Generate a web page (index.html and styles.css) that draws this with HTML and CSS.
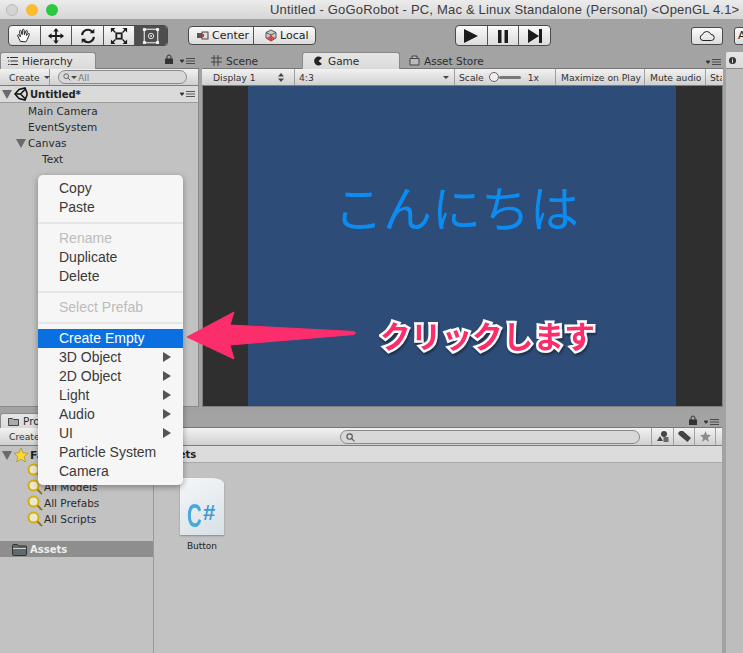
FILE: index.html
```html
<!DOCTYPE html>
<html lang="ja">
<head>
    <meta charset="UTF-8">
    <title>Untitled - GoGoRobot</title>
    <link rel="stylesheet" href="styles.css">
</head>
<body>
<div class="window">
    <div class="titlebar">
        <span class="light light-grey"></span>
        <span class="light light-yellow"></span>
        <span class="light light-green"></span>
        <span class="title">Untitled - GoGoRobot - PC, Mac &amp; Linux Standalone (Personal) &lt;OpenGL 4.1&gt;</span>
    </div>

    <div class="toolbar">
        <div class="btn-group tools">
            <span class="tool"><svg width="20" height="20" viewBox="0 0 20 20"><path d="M6 16 3 10c-.6-1.2.8-2 1.6-1L6 11 5 5c-.2-1.3 1.5-1.6 1.8-.4L8 8.500 8.200 3.500c.1-1.300 1.800-1.300 1.900 0L10.500 8.500 12 4.500c.4-1.200 2-.7 1.700.5L12.700 9.500 14.500 7.500c.9-.9 2.100.1 1.400 1.100L13.500 14c-.5 1.200-1 2-1.500 2.500Z" fill="#fff" stroke="#222" stroke-width="1.100"/></svg></span>
            <span class="tool"><svg width="20" height="20" viewBox="0 0 20 20"><path d="M10 1 13 5H11V9H15V7L19 10 15 13V11H11V15H13L10 19 7 15H9V11H5V13L1 10 5 7V9H9V5H7Z" fill="#1c1c1c"/></svg></span>
            <span class="tool"><svg width="20" height="20" viewBox="0 0 20 20" fill="none" stroke="#1c1c1c" stroke-width="2.400"><path d="M3.500 9A6.500 6.500 0 0 1 15 5.500"/><path d="M16.500 11A6.500 6.500 0 0 1 5 14.500"/><path d="M17 2v5h-5zM3 18v-5h5z" fill="#1c1c1c" stroke="none"/></svg></span>
            <span class="tool"><svg width="20" height="20" viewBox="0 0 20 20"><g fill="none" stroke="#1c1c1c" stroke-width="1.500"><rect x="7" y="7" width="6" height="6" stroke-width="2"/><path d="M2 2l4 4M18 2l-4 4M2 18l4-4M18 18l-4-4"/></g><path d="M1 1h5L1 6zM19 1h-5l5 5zM1 19h5l-5-5zM19 19h-5l5-5z" fill="#1c1c1c"/></svg></span>
            <span class="tool tool-on"><svg width="20" height="20" viewBox="0 0 20 20"><rect x="2.500" y="2.500" width="15" height="15" fill="none" stroke="#eee" stroke-width="1.200"/><circle cx="10" cy="10" r="3" fill="none" stroke="#eee"/><circle cx="10" cy="10" r="1" fill="#eee"/><g fill="#eee"><rect x="1" y="1" width="3.500" height="3.500" rx="1"/><rect x="15.500" y="1" width="3.500" height="3.500" rx="1"/><rect x="1" y="15.500" width="3.500" height="3.500" rx="1"/><rect x="15.500" y="15.500" width="3.500" height="3.500" rx="1"/></g></svg></span>
        </div>
        <div class="btn-group pivot">
            <span class="pivot-btn pivot-center"><svg width="12" height="9" viewBox="0 0 12 9"><rect x="0" y="2" width="5" height="5" fill="#555"/><rect x="5" y="1" width="6" height="7" fill="#ddd" stroke="#444"/><rect x="4" y="3" width="3" height="3" fill="#c33"/></svg>Center</span>
            <span class="pivot-btn pivot-local"><svg width="12" height="13" viewBox="0 0 12 13"><path d="M6 1 11 3.500V9L6 12 1 9V3.500Z" fill="#ccc" stroke="#555"/><path d="M1 3.500 6 6 11 3.500M6 6V12" fill="none" stroke="#555"/><path d="M1.500 9 6 12 10.500 9 6 6.500Z" fill="#d33" opacity=".8"/></svg>Local</span>
        </div>
        <div class="btn-group play">
            <span class="play-btn"><svg width="16" height="14" viewBox="0 0 16 14"><path d="M1 0 15 7 1 14Z" fill="#1c1c1c"/></svg></span>
            <span class="play-btn"><svg width="12" height="14" viewBox="0 0 12 14"><path d="M1 1h3.500v13H1zM7.500 1H11v13H7.500z" fill="#1c1c1c"/></svg></span>
            <span class="play-btn"><svg width="16" height="14" viewBox="0 0 16 14"><path d="M1 0 12 7 1 14ZM12 0h3v14h-3z" fill="#1c1c1c"/></svg></span>
        </div>
        <span class="cloud"><svg width="16" height="10" viewBox="0 0 16 10"><path d="M4 9.500A3 3 0 0 1 3.500 3.600 4.500 4.500 0 0 1 12 3.500 3 3 0 0 1 12.500 9.500Z" fill="none" stroke="#222"/></svg></span>
        <span class="account">A</span>
    </div>

    <div class="upper">
        <section class="hierarchy">
            <div class="tabbar">
                <span class="tab tab-on tab-hierarchy"><svg width="11" height="8" viewBox="0 0 11 8"><path d="M0 .5h2M3 .5h8M1 4h1.500M3.500 4H11M1 7.500h1.500M3.500 7.500H11" stroke="#333" fill="none"/></svg>Hierarchy</span>
                <span class="tab-tools">
                    <svg class="lock" width="8" height="10" viewBox="0 0 8 10"><path d="M2 5V3a2 2 0 0 1 4 0v2" fill="none" stroke="#333"/><rect y="4.500" width="8" height="5.500" fill="#333"/></svg>
                    <svg width="15" height="6" viewBox="0 0 15 6"><path d="M0 2h4L2 4.500zM6 .5h9M6 3h9M6 5.500h9" fill="#333" stroke="#333" stroke-width=".8"/></svg>
                </span>
            </div>
            <div class="panel-bar">
                <span class="bar-create">Create<i class="caret"></i></span>
                <span class="search search-hier"><svg width="8" height="8" viewBox="0 0 8 8"><circle cx="3.200" cy="3.200" r="2.400" fill="none" stroke="#666"/><path d="M5 5l2.500 2.500" stroke="#666"/></svg><i class="caret"></i>All</span>
            </div>
            <div class="scene-row">
                <i class="fold"></i>
                <svg width="14" height="14" viewBox="0 0 14 14"><path d="M1 7 5 2.500 11 1 13 6V8L11 13 5 11.500Z" fill="none" stroke="#111" stroke-width="1.500"/><path d="M1 7H6.500L11 2.500M6.500 7 11 11.500" fill="none" stroke="#111" stroke-width="1.500"/></svg>
                <b>Untitled*</b>
                <svg class="row-menu" width="15" height="6" viewBox="0 0 15 6"><path d="M0 2h4L2 4.500zM6 .5h9M6 3h9M6 5.500h9" fill="#333" stroke="#333" stroke-width=".8"/></svg>
            </div>
            <div class="tree">
                <div class="tree-item">Main Camera</div>
                <div class="tree-item">EventSystem</div>
                <div class="tree-item"><i class="fold fold-canvas"></i>Canvas</div>
                <div class="tree-item tree-child">Text</div>
            </div>
        </section>

        <section class="game">
            <div class="tabbar">
                <span class="tab tab-scene"><svg width="11" height="11" viewBox="0 0 11 11"><path d="M3 0v11M7 0v11M0 3h11M0 7h11" stroke="#444" fill="none"/></svg>Scene</span>
                <span class="tab tab-on tab-game"><svg width="10" height="10" viewBox="0 0 10 10"><path d="M9 2A4.500 4.500 0 1 0 9 8L5.500 5Z" fill="#222"/></svg>Game</span>
                <span class="tab tab-store"><svg width="11" height="11" viewBox="0 0 11 11"><path d="M1 3.500h9V10H1zM3 3.500V1h5v2.500" fill="#bbb" stroke="#444"/></svg>Asset Store</span>
                <svg class="tab-tools game-menu" width="15" height="6" viewBox="0 0 15 6"><path d="M0 2h4L2 4.500zM6 .5h9M6 3h9M6 5.500h9" fill="#333" stroke="#333" stroke-width=".8"/></svg>
            </div>
            <div class="panel-bar game-bar">
                <span class="g-display">Display 1<svg width="6" height="9" viewBox="0 0 6 9"><path d="M3 0 6 3.500H0ZM3 9 0 5.500H6Z" fill="#444"/></svg></span>
                <span class="g-aspect">4:3<i class="caret"></i></span>
                <span class="g-scale">Scale<i class="knob"></i><i class="slide"></i>1x</span>
                <span class="g-max">Maximize on Play</span>
                <span class="g-mute">Mute audio</span>
                <span class="g-stats">Sta</span>
            </div>
            <div class="viewport">
                <div class="screen">こんにちは</div>
            </div>
        </section>

        <section class="inspector">
            <span class="insp-tab"><svg width="7" height="7" viewBox="0 0 7 7"><circle cx="3.500" cy="3.500" r="3.500" fill="#333"/><path d="M3.500 1.500v1M3.500 3.200v2.500" stroke="#fff"/></svg></span>
        </section>
    </div>

    <div class="lower">
        <section class="project">
            <div class="tabbar project-tabs">
                <span class="tab tab-on tab-project"><svg width="11" height="9" viewBox="0 0 11 9"><path d="M.5 1.500h4l1 1h5v6H.5Z" fill="#aaa" stroke="#444"/></svg>Project</span>
                <span class="tab-tools project-tools">
                    <svg class="lock" width="8" height="10" viewBox="0 0 8 10"><path d="M2 5V3a2 2 0 0 1 4 0v2" fill="none" stroke="#333"/><rect y="4.500" width="8" height="5.500" fill="#333"/></svg>
                    <svg width="15" height="6" viewBox="0 0 15 6"><path d="M0 2h4L2 4.500zM6 .5h9M6 3h9M6 5.500h9" fill="#333" stroke="#333" stroke-width=".8"/></svg>
                </span>
            </div>
            <div class="panel-bar project-bar">
                <span class="bar-create project-create">Create<i class="caret"></i></span>
                <span class="search search-project"><svg width="9" height="9" viewBox="0 0 8 8"><circle cx="3.200" cy="3.200" r="2.400" fill="none" stroke="#555"/><path d="M5 5l2.500 2.500" stroke="#555"/></svg></span>
                <span class="bar-icon"><svg width="12" height="11" viewBox="0 0 12 11"><circle cx="7" cy="3" r="3" fill="#444"/><path d="M3 5 6 10H0Z" fill="#444"/><rect x="6.500" y="6" width="5" height="5" fill="#666"/></svg></span>
                <span class="bar-icon"><svg width="13" height="11" viewBox="0 0 13 11"><path d="M0 2 2 0 5 0 13 7 9.500 11 1 4Z" fill="#444"/></svg></span>
                <span class="bar-icon"><svg width="11" height="11" viewBox="0 0 11 11"><path d="M5.500 0 7 3.800 11 4 8 6.700 9 11 5.500 8.600 2 11 3 6.700 0 4 4 3.800Z" fill="#8c8c8c"/></svg></span>
            </div>
            <div class="browser">
                <div class="side">
                    <div class="fav-row"><i class="fold"></i><svg width="14" height="14" viewBox="0 0 11 11"><path d="M5.500 0 7 3.800 11 4 8 6.700 9 11 5.500 8.600 2 11 3 6.700 0 4 4 3.800Z" fill="#fbd92f" stroke="#a58a10" stroke-width=".5"/></svg><b>Favorites</b></div>
                    <div class="fav-item"><svg class="mag" width="16" height="16" viewBox="0 0 16 16"><circle cx="6.500" cy="6.500" r="5" fill="#ece8cf" stroke="#d6ad0a" stroke-width="2"/><path d="M10.500 10.500 15 15" stroke="#8f7a20" stroke-width="2"/></svg>All Materials</div>
                    <div class="fav-item"><svg class="mag" width="16" height="16" viewBox="0 0 16 16"><circle cx="6.500" cy="6.500" r="5" fill="#ece8cf" stroke="#d6ad0a" stroke-width="2"/><path d="M10.500 10.500 15 15" stroke="#8f7a20" stroke-width="2"/></svg>All Models</div>
                    <div class="fav-item"><svg class="mag" width="16" height="16" viewBox="0 0 16 16"><circle cx="6.500" cy="6.500" r="5" fill="#ece8cf" stroke="#d6ad0a" stroke-width="2"/><path d="M10.500 10.500 15 15" stroke="#8f7a20" stroke-width="2"/></svg>All Prefabs</div>
                    <div class="fav-item"><svg class="mag" width="16" height="16" viewBox="0 0 16 16"><circle cx="6.500" cy="6.500" r="5" fill="#ece8cf" stroke="#d6ad0a" stroke-width="2"/><path d="M10.500 10.500 15 15" stroke="#8f7a20" stroke-width="2"/></svg>All Scripts</div>
                    <div class="assets-row"><svg width="15" height="13" viewBox="0 0 15 13"><path d="M.5 2.500a1 1 0 0 1 1-1h4l1 1.500h7a1 1 0 0 1 1 1v7.500a1 1 0 0 1-1 1h-12a1 1 0 0 1-1-1Z" fill="#5f6b6b" stroke="#333"/><path d="M1 5.500h13" stroke="#c8d0d0"/></svg>Assets</div>
                </div>
                <div class="files">
                    <div class="crumb"><b>Assets</b></div>
                    <div class="file">
                        <div class="file-icon"><span class="cs-c">C</span><span class="cs-h">#</span></div>
                        <div class="file-name">Button</div>
                    </div>
                </div>
            </div>
        </section>
        <div class="inspector-low"></div>
    </div>

    <ul class="menu">
        <li>Copy</li>
        <li>Paste</li>
        <li class="sep"></li>
        <li class="off">Rename</li>
        <li>Duplicate</li>
        <li>Delete</li>
        <li class="sep"></li>
        <li class="off">Select Prefab</li>
        <li class="sep"></li>
        <li class="hot">Create Empty</li>
        <li class="sub">3D Object</li>
        <li class="sub">2D Object</li>
        <li class="sub">Light</li>
        <li class="sub">Audio</li>
        <li class="sub">UI</li>
        <li>Particle System</li>
        <li>Camera</li>
    </ul>

    <svg class="arrow" width="175" height="52" viewBox="0 0 175 52"><path d="M1 27 48 2 44 15 168 21.500Q171 23 168 24.500L44 35 48 49Z" fill="#fc2d6b" stroke="#fc2d6b" stroke-linejoin="round"/></svg>
    <div class="note">クリックします</div>
</div>
</body>
</html>
```
FILE: styles.css
```css
* {
    box-sizing: border-box;
}
html, body {
    margin: 0;
    padding: 0;
}
i {
    font-style: normal;
}
.window {
    position: relative;
    width: 743px;
    height: 653px;
    overflow: hidden;
    background: #a2a2a2;
    font-family: "DejaVu Sans", sans-serif;
    font-size: 10px;
    color: #222;
}

/* title bar */
.titlebar {
    height: 19px;
    display: flex;
    align-items: center;
    padding-left: 6px;
    gap: 8px;
    background: linear-gradient(#ececec, #d6d6d6);
}
.light {
    width: 12px;
    height: 12px;
    flex: none;
    border-radius: 50%;
}
.light-grey { background: #d4d4d4; border: 1px solid #bbb; }
.light-yellow { background: #fdbb2e; }
.light-green { background: #2ac940; }
.title {
    margin-left: 204px;
    white-space: nowrap;
    font-family: "Liberation Sans", sans-serif;
    font-size: 13px;
    letter-spacing: 0.19px;
    color: #3c3c3c;
}

/* toolbar */
.toolbar {
    height: 33px;
    display: flex;
    align-items: center;
    padding-left: 8px;
    background: #a3a3a3;
}
.btn-group {
    display: flex;
    flex: none;
    border: 1px solid #4a4a4a;
    border-radius: 4px;
    overflow: hidden;
    background: linear-gradient(#fafafa, #dcdcdc);
}
.tools { height: 21px; width: 160px; }
.tool {
    width: 32px;
    display: flex;
    align-items: center;
    justify-content: center;
    border-right: 1px solid #555;
}
.tool:last-child { border-right: 0; }
.tool svg { width: 18px; height: 18px; }
.tool-on { background: #4e4e4e; }
.pivot {
    height: 19px;
    width: 128px;
    margin-left: 20px;
    font-size: 11px;
}
.pivot-btn {
    display: flex;
    align-items: center;
    gap: 3px;
}
.pivot-center {
    width: 65px;
    padding-left: 8px;
    border-right: 1px solid #555;
}
.pivot-local { padding-left: 11px; }
.play {
    height: 21px;
    width: 96px;
    margin-left: 139px;
}
.play-btn {
    flex: 1;
    display: flex;
    align-items: center;
    justify-content: center;
    border-right: 1px solid #555;
}
.play-btn:last-child { border-right: 0; }
.cloud {
    width: 32px;
    height: 18px;
    margin-left: 140px;
    flex: none;
    display: flex;
    align-items: center;
    justify-content: center;
    border: 1px solid #4a4a4a;
    border-radius: 3px;
    background: linear-gradient(#fafafa, #dcdcdc);
}
.account {
    width: 30px;
    height: 18px;
    margin-left: 11px;
    flex: none;
    padding-left: 3px;
    border: 1px solid #4a4a4a;
    border-radius: 3px;
    background: linear-gradient(#fafafa, #dcdcdc);
    font-size: 11px;
    line-height: 16px;
}

/* panels */
.upper {
    height: 361px;
    display: flex;
}
.hierarchy {
    width: 199px;
    flex: none;
    height: 355px;
    display: flex;
    flex-direction: column;
    background: #c2c2c2;
    border-right: 1px solid #8a8a8a;
    border-bottom: 1px solid #8a8a8a;
}
.game {
    width: 521px;
    margin-left: 3px;
    flex: none;
    height: 355px;
    display: flex;
    flex-direction: column;
}
.tabbar {
    position: relative;
    height: 17px;
    flex: none;
    display: flex;
    background: #a3a3a3;
    border-bottom: 1px solid #777;
    font-size: 10.500px;
}
.hierarchy .tabbar { margin-right: -1px; }
.tab {
    display: flex;
    align-items: center;
    gap: 4px;
    height: 17px;
    color: #2c2c2c;
}
.tab-on {
    background: linear-gradient(#e6e6e6, #dadada);
    border-radius: 3px 3px 0 0;
    border: 1px solid #888;
    border-bottom: 0;
}
.tab-hierarchy { width: 96px; padding-left: 6px; }
.tab-tools {
    position: absolute;
    right: 4px;
    top: 5px;
    display: flex;
    gap: 7px;
    align-items: flex-end;
}
.tab-tools .lock { margin-top: -3px; }
.tab-hierarchy svg { flex: none; }
.tab-scene { margin-left: 9px; width: 91px; }
.tab-game { width: 98px; padding-left: 10px; gap: 5px; }
.tab-store { margin-left: 9px; }
.game-menu { top: 7px; right: 2px; }
.panel-bar {
    height: 17px;
    flex: none;
    display: flex;
    align-items: center;
    background: linear-gradient(#f2f2f2, #d0d0d0);
    border-bottom: 1px solid #7e7e7e;
    font-size: 9.200px;
    color: #333;
}
.bar-create {
    width: 50px;
    height: 16px;
    padding-left: 9px;
    display: flex;
    align-items: center;
    gap: 4px;
    border-right: 1px solid #a0a0a0;
}
.caret {
    display: inline-block;
    border: 3px solid transparent;
    border-top: 3px solid #444;
    border-bottom: 0;
}
.search {
    display: flex;
    align-items: center;
    border: 1px solid #8a8a8a;
    border-radius: 7px;
    background: #d8d8d8;
    height: 14px;
}
.search-hier {
    width: 129px;
    margin-left: 8px;
    padding-left: 4px;
    color: #7a7a7a;
}
.search-hier .caret { margin-right: 1px; }
.scene-row {
    height: 17px;
    flex: none;
    display: flex;
    align-items: center;
    position: relative;
    padding-left: 2px;
    gap: 2px;
    background: #dadada;
    border-bottom: 1px solid #9a9a9a;
    font-size: 10px;
}
.row-menu {
    position: absolute;
    right: 3px;
    top: 5px;
}
.fold {
    display: inline-block;
    flex: none;
    border: 5px solid transparent;
    border-top: 9px solid #6a6a6a;
    border-bottom: 0;
}
.tree {
    font-size: 10.500px;
}
.tree-item {
    height: 16px;
    line-height: 16px;
    padding-left: 28px;
    position: relative;
    color: #2a2a2a;
}
.fold-canvas {
    position: absolute;
    left: 16px;
    top: 4px;
}
.tree-child { padding-left: 42px; }

/* game view */
.game-bar span {
    height: 16px;
    display: flex;
    align-items: center;
    flex: none;
    border-right: 1px solid #a0a0a0;
    white-space: nowrap;
}
.g-display {
    width: 88px;
    padding-left: 6px;
    justify-content: space-between;
    padding-right: 10px;
    margin-left: 5px;
}
.g-aspect {
    width: 160px;
    padding-left: 4px;
    justify-content: space-between;
    padding-right: 5px;
}
.g-scale {
    width: 101px;
    padding-left: 4px;
}
.knob {
    width: 10px;
    height: 10px;
    margin-left: 5px;
    flex: none;
    border-radius: 50%;
    border: 1px solid #666;
    background: #eee;
}
.slide {
    width: 22px;
    height: 3px;
    margin-right: 7px;
    flex: none;
    background: #777;
    border-radius: 2px;
}
.g-max { width: 89px; padding-left: 5px; }
.g-mute { width: 61px; padding-left: 5px; }
.g-stats { width: 16px; padding-left: 4px; overflow: hidden; border-right: 0 !important; }
.viewport {
    flex: 1;
    display: flex;
    justify-content: center;
    background: #2f2f2f;
    border: 1px solid #808080;
    border-top: 0;
}
.screen {
    width: 428px;
    margin-right: 2px;
    padding: 85px 10px 0 0;
    background: #2d4c78;
    text-align: center;
    white-space: nowrap;
    color: #0c8cf0;
    font-family: "Noto Sans CJK JP", sans-serif;
    font-weight: 400;
    font-size: 49px;
    line-height: 70px;
}
.inspector {
    flex: 1;
    margin-left: 3px;
    display: flex;
    flex-direction: column;
    background: #bdbdbd;
}
.insp-tab {
    height: 17px;
    padding-left: 3px;
    display: flex;
    align-items: center;
    background: linear-gradient(#e6e6e6, #dadada);
    border-bottom: 1px solid #888;
    border-radius: 3px 0 0 0;
}

/* project */
.lower {
    height: 240px;
    display: flex;
}
.project {
    width: 722px;
    flex: none;
    display: flex;
    flex-direction: column;
}
.project-tabs { height: 15px; }
.tab-project {
    width: 70px;
    height: 15px;
    padding-left: 7px;
}
.project-tools { top: 5px; right: 3px; }
.project-bar {
    height: 18px;
    position: relative;
}
.project-create { padding-left: 9px; width: 60px; }
.search-project {
    position: absolute;
    left: 340px;
    top: 2px;
    width: 300px;
    padding-left: 5px;
}
.bar-icon {
    position: absolute;
    top: 0;
    width: 22px;
    height: 17px;
    display: flex;
    align-items: center;
    justify-content: center;
    border-left: 1px solid #a0a0a0;
}
.bar-icon:nth-of-type(3) { left: 651px; }
.bar-icon:nth-of-type(4) { left: 673px; }
.bar-icon:nth-of-type(5) { left: 694px; border-right: 1px solid #a0a0a0; }
.browser {
    flex: 1;
    display: flex;
    background: #c2c2c2;
}
.side {
    width: 154px;
    flex: none;
    padding-top: 1px;
    border-right: 1px solid #9a9a9a;
    font-size: 10.500px;
}
.fav-row {
    height: 16px;
    display: flex;
    align-items: center;
    gap: 2px;
    padding-left: 2px;
    font-size: 11px;
}
.fav-item {
    height: 16px;
    display: flex;
    align-items: center;
    gap: 1px;
    padding-left: 27px;
    color: #2a2a2a;
}
.mag { flex: none; }
.assets-row {
    height: 16px;
    margin-top: 14px;
    display: flex;
    align-items: center;
    gap: 3px;
    padding-left: 12px;
    background: #8e8e8e;
    color: #efefef;
    font-weight: bold;
    font-size: 10px;
}
.files {
    flex: 1;
}
.crumb {
    height: 17px;
    padding-left: 5px;
    line-height: 17px;
    background: #dcdcdc;
    border-bottom: 1px solid #a8a8a8;
    font-size: 10px;
}
.file {
    width: 44px;
    margin-left: 26px;
    margin-top: 15px;
    text-align: center;
}
.file-icon {
    width: 44px;
    height: 57px;
    padding: 25px 0 0 7px;
    display: flex;
    align-items: flex-start;
    background: linear-gradient(150deg, #f4f7f9, #d8e0e6);
    border-top-right-radius: 12px 6px;
    box-shadow: 0 1px 2px #888;
    font-family: "Liberation Sans", sans-serif;
}
.cs-c {
    display: block;
    width: 16px;
    color: #48a8de;
    font-weight: bold;
    font-size: 33px;
    line-height: 26px;
    transform: scaleX(0.62);
    transform-origin: left top;
}
.cs-h {
    color: #3f9ad2;
    font-weight: bold;
    font-size: 22px;
    line-height: 20px;
}
.file-name {
    margin-top: 6px;
    font-size: 9px;
}
.inspector-low {
    flex: 1;
    margin-left: 4px;
    background: #bdbdbd;
}

/* context menu */
.menu {
    position: absolute;
    left: 38px;
    top: 175px;
    width: 145px;
    height: 310px;
    margin: 0;
    padding: 4px 0;
    list-style: none;
    background: #f6f6f6;
    border-radius: 5px;
    box-shadow: 0 2px 6px rgba(0,0,0,0.35);
    font-family: "Liberation Sans", sans-serif;
    font-size: 14px;
    color: #3a3a3a;
}
.menu li {
    height: 19px;
    line-height: 19px;
    padding-left: 21px;
    position: relative;
}
.menu .sep {
    height: 12px;
    padding: 0;
    background: linear-gradient(#f6f6f6 5px, #e6e6e6 5px, #e6e6e6 7px, #f6f6f6 7px);
}
.menu .off { color: #bcbcbc; }
.menu .hot {
    background: #0a6fe0;
    color: #fff;
}
.menu .sub::after {
    content: "";
    position: absolute;
    right: 12px;
    top: 4px;
    border: 5px solid transparent;
    border-left: 8px solid #555;
    border-right: 0;
}

/* annotation */
.arrow {
    position: absolute;
    left: 186px;
    top: 310px;
}
.note {
    position: absolute;
    left: 380px;
    top: 312px;
    white-space: nowrap;
    font-family: "Noto Sans CJK JP", sans-serif;
    font-weight: 700;
    font-size: 30.700px;
    line-height: 46px;
    color: #fc2d6b;
    -webkit-text-stroke: 5px #fff;
    paint-order: stroke fill;
    filter: drop-shadow(1px 2px 1px rgba(0,0,0,0.4));
}
```
